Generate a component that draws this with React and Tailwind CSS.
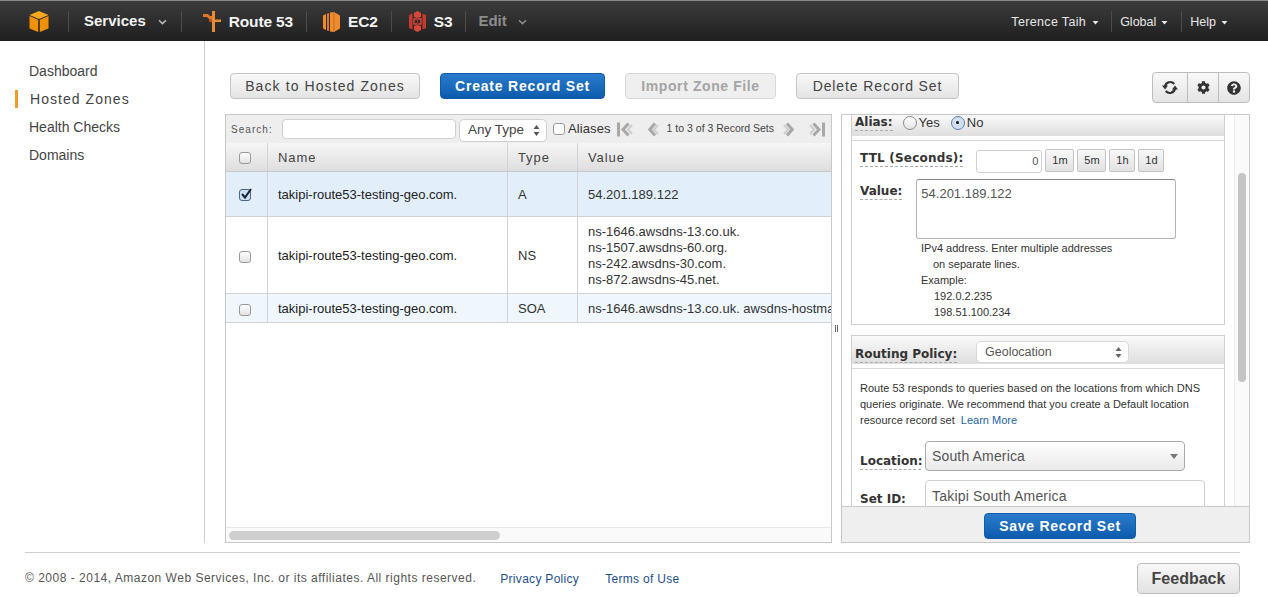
import React from "react";
import { FaCog, FaQuestionCircle } from "react-icons/fa";

function Caret({ className = "" }) {
  return (
    <svg width="9" height="6" viewBox="0 0 9 6" className={className}>
      <path d="M1 1.2 L4.5 4.6 L8 1.2" fill="none" stroke="currentColor" strokeWidth="1.5" />
    </svg>
  );
}

function SmallCaret({ className = "ml-[5px]" }) {
  return (
    <svg width="7" height="4" viewBox="0 0 7 4" className={"mt-[1px] " + className}>
      <path d="M0.5 0 L3.5 3.5 L6.5 0 Z" fill="currentColor" />
    </svg>
  );
}

function Sep() {
  return <div className="w-px h-[21px] bg-[#4c4c4c] shrink-0" />;
}

function Cube() {
  return (
    <svg width="20" height="21" viewBox="0 0 20 21">
      <path d="M10 0 L19.5 4 L10 8 L0.5 4 Z" fill="#f7a81b" />
      <path d="M0.5 5 L9.2 8.8 V21 L0.5 17.5 Z" fill="#f29100" />
      <path d="M19.5 5 L10.8 8.8 V21 L19.5 17.5 Z" fill="#f29100" />
    </svg>
  );
}

function Route53() {
  return (
    <svg width="18" height="21" viewBox="0 0 18 21">
      <path d="M0 3 H5 L7 5 H9 V8 H6 L4 6 H0 Z" fill="#e0762a" />
      <path d="M9 0 H12 V8.5 H18 V11 H12 V21 H9 Z" fill="#e98b32" />
      <path d="M6 8 H9 V11 H6 Z" fill="#b9541c" />
    </svg>
  );
}

function EC2() {
  return (
    <svg width="17" height="20" viewBox="0 0 17 20">
      <path d="M0 3.5 L3 2 V18 L0 16.5 Z" fill="#f08a2c" />
      <path d="M4 1.5 L6 1 V19 L4 18.5 Z" fill="#e07a20" />
      <path d="M7 0.5 L11 0 L17 3.5 V16.5 L11 20 L7 19.5 Z" fill="#ef8a2d" />
      <path d="M11 0 V20" stroke="#b95f18" strokeWidth="0.7" />
    </svg>
  );
}

function S3() {
  return (
    <svg width="17" height="21" viewBox="0 0 17 21">
      <path d="M0 4 L3.5 2.5 V18.5 L0 17 Z" fill="#c8392b" />
      <path d="M17 4 L13.5 2.5 V18.5 L17 17 Z" fill="#c8392b" />
      <path d="M5 2 L8.5 0 L12 2 V6 L8.5 7 L5 6 Z" fill="#d8463a" />
      <path d="M5 15 L8.5 14 L12 15 V19 L8.5 21 L5 19 Z" fill="#d8463a" />
      <path d="M5 8 H12 V13 H5 Z" fill="none" stroke="#d8463a" strokeWidth="1.4" />
      <path d="M8.5 7 V14" stroke="#a52b20" strokeWidth="1" />
    </svg>
  );
}

function Refresh() {
  return (
    <svg width="16" height="15" viewBox="0 0 16 15">
      <path d="M3 6.5 A5.2 5.2 0 0 1 12.2 4" fill="none" stroke="#333" strokeWidth="2.2" />
      <path d="M0 5.5 H6 L3 9.5 Z" fill="#333" />
      <path d="M13 8.5 A5.2 5.2 0 0 1 3.8 11" fill="none" stroke="#333" strokeWidth="2.2" />
      <path d="M16 9.5 H10 L13 5.5 Z" fill="#333" />
    </svg>
  );
}

const navText = "font-bold text-[15.5px] tracking-[-0.15px] text-[#f4f4f4]";

function Header() {
  return (
    <header className="h-[41px] flex items-center justify-between border-t border-[#8a8a8a] pt-[1px] bg-gradient-to-b from-[#3c3c3c] to-[#1f1f1f] text-white">
      <div className="flex items-center h-full">
        <div className="w-[68px] pl-[29px] flex items-center"><Cube /></div>
        <Sep />
        <div className="flex items-center pl-[15px] pr-[14px] font-bold text-[15px] text-[#f2f2f2]">
          Services
          <Caret className="ml-[12px] text-[#bbb]" />
        </div>
        <Sep />
        <div className={"flex items-center gap-[8px] pl-[21px] pr-[13px] " + navText}>
          <Route53 /> Route 53
        </div>
        <Sep />
        <div className={"flex items-center gap-[8px] pl-[16px] pr-[13px] " + navText}>
          <EC2 /> EC2
        </div>
        <Sep />
        <div className={"flex items-center gap-[8px] pl-[17px] pr-[13px] " + navText}>
          <S3 /> S3
        </div>
        <Sep />
        <div className="flex items-center pl-[12px] font-bold text-[15px] text-[#8c8c8c]">
          Edit
          <Caret className="ml-[11px] text-[#8c8c8c]" />
        </div>
      </div>
      <div className="flex items-center h-full text-[12.5px] text-[#e8e8e8] pr-[40px]">
        <div className="flex items-center pr-[12px] pt-px"><span className="tracking-[0.35px]">Terence Taih</span><SmallCaret className="ml-[6px]" /></div>
        <Sep />
        <div className="flex items-center pl-[8px] pr-[13px] pt-px">Global<SmallCaret /></div>
        <Sep />
        <div className="flex items-center pl-[8px] pt-px">Help<SmallCaret /></div>
      </div>
    </header>
  );
}

function Sidebar() {
  const items = ["Dashboard", "Hosted Zones", "Health Checks", "Domains"];
  return (
    <aside className="w-[205px] shrink-0 border-r border-[#cfcfcf] pt-[16px] text-[14px] text-[#444]">
      {items.map((t, i) => (
        <div key={t} className="h-[28px] flex items-center relative pl-[29px]">
          {i === 1 && <span className="absolute left-[15px] top-[5px] w-[3px] h-[18px] bg-[#f29a2e]" />}
          <span className={i === 1 ? "tracking-[1.05px] pl-px" : ""}>{t}</span>
        </div>
      ))}
    </aside>
  );
}

const btnBase = "h-[26px] rounded-[4px] flex items-center justify-center text-[14px]";
const grayBtn = btnBase + " border border-[#c4c4c4] bg-gradient-to-b from-[#f8f8f8] to-[#e4e4e4] text-[#444]";
const blueBtn = "rounded-[4px] flex items-center justify-center font-bold text-[14px] text-white bg-gradient-to-b from-[#2a7bcb] to-[#0b5cae] border border-[#0f5ca8]";

function Toolbar() {
  return (
    <div className="h-[73px] flex items-start pt-[32px] pl-[25px] pr-[18px] justify-between">
      <div className="flex items-center">
        <button className={grayBtn + " w-[190px] tracking-[1.1px]"}>Back to Hosted Zones</button>
        <button className={blueBtn + " h-[26px] w-[165px] ml-[20px] tracking-[0.8px]"}>Create Record Set</button>
        <button className={btnBase + " w-[151px] ml-[20px] border border-[#d8d8d8] bg-[#efefef] text-[#a4a4a4] font-bold tracking-[0.6px]"}>Import Zone File</button>
        <button className={grayBtn + " w-[163px] ml-[20px] tracking-[0.9px]"}>Delete Record Set</button>
      </div>
      <div className="flex h-[31px] rounded-[4px] border border-[#bdbdbd] bg-gradient-to-b from-[#f8f8f8] to-[#e4e4e4] text-[#333] -mt-[1px]">
        <div className="w-[35px] flex items-center justify-center border-r border-[#bdbdbd]"><Refresh /></div>
        <div className="w-[31px] flex items-center justify-center border-r border-[#bdbdbd]"><FaCog size={13} /></div>
        <div className="w-[30px] flex items-center justify-center"><FaQuestionCircle size={14} /></div>
      </div>
    </div>
  );
}

function PagerEnd({ flip }) {
  return (
    <svg width="16" height="15" viewBox="0 0 16 15" className={"shrink-0 " + (flip ? "-scale-x-100" : "")}>
      <rect x="0" y="0.5" width="3" height="14" fill="#a8a8a8" />
      <polyline points="15,3 11,7.5 15,12" fill="none" stroke="#cfcfcf" strokeWidth="2.4" />
      <polyline points="11.5,1.5 6,7.5 11.5,13.5" fill="none" stroke="#a8a8a8" strokeWidth="3" />
    </svg>
  );
}

function PagerStep({ flip }) {
  return (
    <svg width="11" height="15" viewBox="0 0 11 15" className={"shrink-0 " + (flip ? "-scale-x-100" : "")}>
      <polyline points="10,3 6,7.5 10,12" fill="none" stroke="#cfcfcf" strokeWidth="2.4" />
      <polyline points="7,1.5 1.8,7.5 7,13.5" fill="none" stroke="#a8a8a8" strokeWidth="3" />
    </svg>
  );
}

function Check({ checked, className = "" }) {
  return (
    <span className={"relative inline-block w-[12px] h-[12px] rounded-[3px] border mr-[4px] " + className + " " + (checked ? "border-[#44668f] bg-[#cfe0f3]" : "border-[#9a9a9a] bg-gradient-to-b from-[#fff] to-[#e2e2e2]")}>
      {checked && (
        <svg width="14" height="14" viewBox="0 0 14 14" className="absolute -left-[1px] -top-[3px]">
          <path d="M3 7 L6 10.5 L12 2" fill="none" stroke="#15213a" strokeWidth="2" />
        </svg>
      )}
    </span>
  );
}

function Row({ h, bg, checked, type, children }) {
  return (
    <div className={"flex border-b border-[#cfd3d6] text-[13px] text-[#333] " + bg + " " + h}>
      <div className="w-[42px] shrink-0 flex items-center justify-center border-r border-[#cfd3d6]"><Check checked={checked} className={checked ? "mt-px" : "mt-[3px]"} /></div>
      <div className="w-[240px] shrink-0 flex items-center pl-[10px] pt-[2px] border-r border-[#cfd3d6] text-[#222]">takipi-route53-testing-geo.com.</div>
      <div className="w-[70px] shrink-0 flex items-center pl-[10px] pt-[2px] border-r border-[#cfd3d6]">{type}</div>
      <div className="flex-1 min-w-0 flex flex-col justify-center pl-[10px] pt-[2px] leading-[16px] whitespace-nowrap overflow-hidden">{children}</div>
    </div>
  );
}

function ListPanel() {
  return (
    <section className="w-[607px] h-full shrink-0 border border-[#c8c8c8] flex flex-col bg-white">
      <div className="h-[28px] bg-[#eeeeee] flex items-center pl-[5px] shrink-0">
        <span className="text-[10px] tracking-[1.05px] text-[#555] w-[51px]">Search:</span>
        <span className="w-[174px] h-[20px] bg-white border border-[#d0d0d0] rounded-[4px]" />
        <span className="ml-[3px] w-[88px] h-[23px] mt-[3px] bg-white border border-[#d0d0d0] rounded-[5px] flex items-center pl-[8px] justify-between pr-[6px] text-[13.5px] text-[#444]">
          Any Type
          <svg width="7" height="11" viewBox="0 0 7 11"><path d="M3.5 0 L6.5 4 H0.5 Z M3.5 11 L0.5 7 H6.5 Z" fill="#555" /></svg>
        </span>
        <span className="ml-[6px] w-[12px] h-[12px] rounded-[3px] border border-[#9a9a9a] bg-white" />
        <span className="ml-[3px] text-[13px] tracking-[0.1px] text-[#333]">Aliases</span>
        <span className="ml-[6px] flex items-center"><PagerEnd /></span>
        <span className="ml-[15px] flex items-center"><PagerStep /></span>
        <span className="ml-[8px] text-[10.5px] text-[#444] whitespace-nowrap">1 to 3 of 3 Record Sets</span>
        <span className="ml-[9px] flex items-center"><PagerStep flip /></span>
        <span className="ml-[15px] flex items-center"><PagerEnd flip /></span>
      </div>
      <div className="h-[29px] shrink-0 flex bg-gradient-to-b from-[#f6f6f6] to-[#dedede] border-b border-[#c8c8c8] text-[13px] tracking-[0.9px] text-[#444]">
        <div className="w-[42px] flex items-center justify-center border-r border-[#cfd3d6]"><Check className="mt-px" /></div>
        <div className="w-[240px] flex items-center pl-[10px] pt-[2px] border-r border-[#cfd3d6]">Name</div>
        <div className="w-[70px] flex items-center pl-[10px] pt-[2px] border-r border-[#cfd3d6]">Type</div>
        <div className="flex-1 flex items-center pl-[10px] pt-[2px]">Value</div>
      </div>
      <Row h="h-[45px]" bg="bg-[#e2effb]" checked type="A">54.201.189.122</Row>
      <Row h="h-[77px]" bg="bg-white" type="NS">
        <div>ns-1646.awsdns-13.co.uk.</div>
        <div>ns-1507.awsdns-60.org.</div>
        <div>ns-242.awsdns-30.com.</div>
        <div>ns-872.awsdns-45.net.</div>
      </Row>
      <Row h="h-[29px]" bg="bg-[#eff7fd]" type="SOA">ns-1646.awsdns-13.co.uk. awsdns-hostma</Row>
      <div className="flex-1" />
      <div className="h-[15px] shrink-0 border-t border-[#e8e8e8] bg-[#fafafa] pl-[3px] pt-[3px]">
        <div className="w-[271px] h-[9px] rounded-[5px] bg-[#cfcfcf]" />
      </div>
    </section>
  );
}

function Label({ children, className = "" }) {
  return (
    <span className={"font-['DejaVu_Sans'] font-bold text-[12px] text-[#333] border-b border-dashed border-[#aaa] leading-[15px] " + className}>{children}</span>
  );
}

function Radio({ on }) {
  return (
    <span className={"relative w-[14px] h-[14px] rounded-full border inline-block " + (on ? "border-[#5a7ea8] bg-[#cfe0f3]" : "border-[#8a8a8a] bg-gradient-to-b from-white to-[#e4e4e4]")}>
      {on && <span className="absolute left-[4.5px] top-[4.5px] w-[3px] h-[3px] rounded-full bg-[#111]" />}
    </span>
  );
}

function Time({ children, w = "w-[29px]" }) {
  return (
    <span className={"h-[23px] flex items-center justify-center rounded-[2px] border border-[#c4c4c4] bg-gradient-to-b from-[#f8f8f8] to-[#e2e2e2] text-[11px] text-[#333] " + w}>{children}</span>
  );
}

function Splitter() {
  return (
    <div className="w-[9px] shrink-0 flex items-center justify-center gap-px">
      <span className="w-px h-[7px] bg-[#666]" />
      <span className="w-px h-[7px] bg-[#666]" />
    </div>
  );
}

function EditPanel() {
  return (
    <section className="w-[409px] h-full shrink-0 border border-[#c8c8c8] flex flex-col bg-white">
      <div className="flex-1 min-h-0 overflow-hidden flex relative">
        <div className="flex-1 pl-[9px] min-w-0">
          <div className="w-[374px] h-[210px] border border-t-0 border-[#cfcfcf]">
            <div className="h-[21px] bg-gradient-to-b from-[#fafafa] to-[#dedede] flex items-start pl-[3px] text-[13px] text-[#333] leading-[15px]">
              <Label>Alias:</Label>
              <span className="ml-[10px] flex items-center gap-[2px]"><Radio />Yes</span>
              <span className="ml-[11px] flex items-center gap-[2px]"><Radio on />No</span>
            </div>
            <div className="border-t border-[#d8d8d8] mt-[4px] pl-[8px] pt-[8px]">
              <div className="flex items-start">
                <Label className="mt-[2px] tracking-[0.2px]">TTL (Seconds):</Label>
                <span className="ml-[13px] w-[66px] h-[23px] border border-[#cfcfcf] rounded-[3px] flex items-center justify-end pr-[3px] text-[11px] text-[#555] mt-px">0</span>
                <span className="flex ml-[3px] gap-[3px]">
                  <Time w="w-[29px]">1m</Time>
                  <Time w="w-[29px]">5m</Time>
                  <Time w="w-[26px]">1h</Time>
                  <Time w="w-[26px]">1d</Time>
                </span>
              </div>
              <div className="flex items-start mt-[6px]">
                <Label className="mt-[5px]">Value:</Label>
                <span className="ml-[14px] w-[260px] h-[60px] border border-[#b5b5b5] border-t-[#888] rounded-[3px] px-[4px] pt-[6px] text-[13px] text-[#555] leading-[15px]">54.201.189.122</span>
              </div>
              <div className="pl-[61px] pt-px text-[11px] leading-[16px] text-[#333]">
                <div>IPv4 address. Enter multiple addresses</div>
                <div className="pl-[12px]">on separate lines.</div>
                <div>Example:</div>
                <div className="pl-[13px]">192.0.2.235</div>
                <div className="pl-[13px]">198.51.100.234</div>
              </div>
            </div>
          </div>
          <div className="w-[374px] mt-[10px] border border-[#cfcfcf] h-[300px]">
            <div className="h-[28px] bg-gradient-to-b from-[#fafafa] to-[#dedede] flex items-end pl-[3px] relative">
              <Label className="mb-px">Routing Policy:</Label>
              <span className="absolute left-[124px] top-[5px] w-[153px] h-[22px] bg-white border border-[#d8d8d8] rounded-[5px] flex items-center justify-between pl-[8px] pr-[6px] text-[12.5px] text-[#555]">
                Geolocation
                <svg width="7" height="11" viewBox="0 0 7 11"><path d="M3.5 0 L6.5 4 H0.5 Z M3.5 11 L0.5 7 H6.5 Z" fill="#666" /></svg>
              </span>
            </div>
            <div className="border-t border-[#d8d8d8] mt-[4px] pl-[8px] pt-[11px] text-[11px] leading-[16px] text-[#333]">
              <div>Route 53 responds to queries based on the locations from which DNS</div>
              <div>queries originate. We recommend that you create a Default location</div>
              <div>resource record set <span className="ml-[3px] text-[#1b5fa6]">Learn More</span></div>
              <div className="flex items-start mt-[13px]">
                <Label className="mt-[13px] w-[61px] whitespace-nowrap">Location:</Label>
                <span className="ml-[4px] w-[260px] h-[30px] border border-[#aaa] rounded-[4px] bg-gradient-to-b from-[#fff] to-[#eaeaea] flex items-center justify-between pl-[6px] pr-[6px] text-[14px] tracking-[0.15px] text-[#555]">
                  South America
                  <svg width="8" height="5" viewBox="0 0 8 5"><path d="M0 0 H8 L4 5 Z" fill="#777" /></svg>
                </span>
              </div>
              <div className="flex items-start mt-[9px]">
                <span className="font-['DejaVu_Sans'] font-bold text-[12px] text-[#333] leading-[15px] mt-[12px] w-[61px]">Set ID:</span>
                <span className="ml-[4px] w-[280px] h-[40px] border border-[#cfcfcf] rounded-[4px] pl-[6px] pt-[5px] text-[14px] tracking-[0.2px] text-[#555] leading-[20px]">Takipi South America</span>
              </div>
            </div>
          </div>
        </div>
        <div className="w-[15px] shrink-0 border-l border-[#ececec] bg-[#fafafa] pl-[3px] pt-[58px]">
          <div className="w-[8px] h-[209px] rounded-[4px] bg-[#c4c4c4]" />
        </div>
      </div>
      <div className="h-[36px] shrink-0 bg-[#efefef] border-t border-[#c8c8c8] flex items-center justify-center pt-[3px]">
        <button className={blueBtn + " w-[152px] h-[26px] ml-[29px] tracking-[0.75px]"}>Save Record Set</button>
      </div>
    </section>
  );
}

function Footer() {
  return (
    <footer className="ml-[25px] mr-[28px] mt-[9px] border-t border-[#cfcfcf] h-[45px] flex items-start">
      <span className="mt-[16px] text-[12px] tracking-[0.5px] text-[#555]">© 2008 - 2014, Amazon Web Services, Inc. or its affiliates. All rights reserved.</span>
      <span className="ml-[24px] mt-[17px] text-[12px] tracking-[0.3px] text-[#1c4f8c]">Privacy Policy</span>
      <span className="ml-[26px] mt-[17px] text-[12px] tracking-[0.3px] text-[#1c4f8c]">Terms of Use</span>
      <button className="ml-auto mt-[10px] w-[103px] h-[31px] rounded-[4px] border border-[#bdbdbd] bg-gradient-to-b from-[#f8f8f8] to-[#e2e2e2] font-bold text-[16px] text-[#444] flex items-center justify-center">Feedback</button>
    </footer>
  );
}

export default function App() {
  return (
    <div className="w-[1268px] h-[597px] overflow-hidden bg-white font-['Liberation_Sans',Arial,sans-serif]">
      <Header />
      <div className="flex h-[502px]">
        <Sidebar />
        <main className="flex-1 min-w-0 flex flex-col">
          <Toolbar />
          <div className="flex-1 min-h-0 flex pl-[20px]">
            <ListPanel />
            <Splitter />
            <EditPanel />
          </div>
        </main>
      </div>
      <Footer />
    </div>
  );
}
